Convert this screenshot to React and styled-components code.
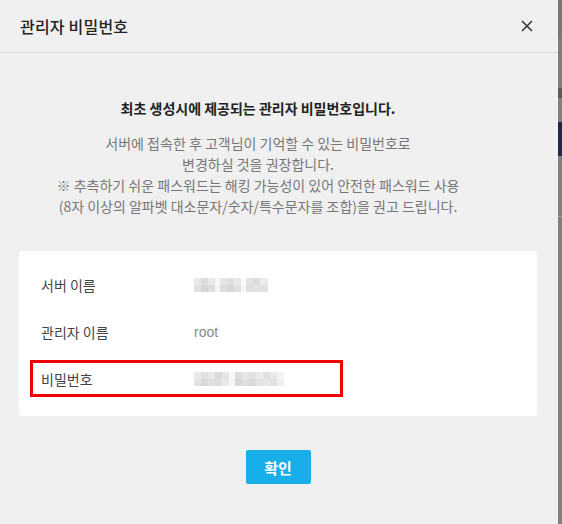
import React from "react";
import styled, { createGlobalStyle } from "styled-components";

const GlobalStyle = createGlobalStyle`
  html, body {
    margin: 0;
    padding: 0;
    background: #7f7f7f;
  }
  body {
    font-family: "Noto Sans CJK KR", "Noto Sans", sans-serif;
  }
`;

const Screen = styled.div`
  display: flex;
  width: 562px;
  height: 524px;
  overflow: hidden;
`;

const Dialog = styled.div`
  width: 558px;
  height: 524px;
  background: #f0f0f0;
  display: flex;
  flex-direction: column;
`;

const Backdrop = styled.div`
  flex: 1;
  display: flex;
  flex-direction: column;
  background: #808080;
`;

const BackdropBand = styled.div`
  height: ${(p) => p.h}px;
  background: ${(p) => p.c};
`;

const Header = styled.div`
  height: 52px;
  border-bottom: 1px solid #dcdcdc;
  display: flex;
  align-items: center;
  justify-content: space-between;
  padding: 0 20px 0 20px;
`;

const Title = styled.h2`
  margin: 0;
  font-size: 16px;
  font-weight: 500;
  color: #222;
  letter-spacing: 0.2px;
`;

const Close = styled.button`
  border: 0;
  background: none;
  padding: 0;
  width: 16px;
  height: 16px;
  display: flex;
  align-items: center;
  justify-content: center;
  cursor: pointer;
  margin-right: 3px;
`;

const Body = styled.div`
  padding: 45px 21px 0 19px;
  display: flex;
  flex-direction: column;
  align-items: center;
`;

const Notice = styled.div`
  width: 100%;
  padding-right: 40px;
  box-sizing: border-box;
  text-align: center;
`;

const Lead = styled.p`
  margin: 0 0 15px;
  font-size: 14px;
  font-weight: 700;
  color: #222;
  line-height: 20px;
`;

const Desc = styled.p`
  margin: 0;
  font-size: 14px;
  color: #777;
  line-height: 21px;
`;

const InfoCard = styled.div`
  margin-top: 34px;
  width: 100%;
  background: #fff;
  border-radius: 3px;
  padding: 10px 11px 19px;
  box-sizing: border-box;
  display: flex;
  flex-direction: column;
`;

const Row = styled.div`
  display: flex;
  align-items: center;
  padding-left: 8px;
  width: 313px;
  box-sizing: border-box;
  border: 3px solid ${(p) => (p.$highlight ? "#f00000" : "transparent")};
  height: ${(p) => (p.$highlight ? "37px" : "47px")};
  margin-top: ${(p) => (p.$highlight ? "5px" : "0")};
`;

const Label = styled.span`
  width: 153px;
  font-size: 14px;
  color: #444;
`;

const Value = styled.span`
  font-size: 14px;
  color: #888;
  font-family: "Liberation Sans", Arial, sans-serif;
`;

const Blurred = styled.span`
  display: inline-flex;
  align-items: center;
`;

const PixelColumn = styled.span`
  display: inline-flex;
  flex-direction: column;
`;

const Pixel = styled.span`
  display: inline-block;
  width: ${(p) => p.w}px;
  height: 7px;
  background: ${(p) => p.c};
`;

const Footer = styled.div`
  display: flex;
  justify-content: center;
  margin-top: 34px;
`;

const Confirm = styled.button`
  width: 65px;
  height: 34px;
  border: 0;
  border-radius: 2px;
  background: #17aeea;
  color: #fff;
  font-family: "Noto Sans CJK KR", sans-serif;
  font-size: 15px;
  font-weight: 700;
  cursor: pointer;
`;

const BlurBlock = ({ cells }) => (
  <Blurred>
    {cells.map((c, i) => (
      <PixelColumn key={i}>
        <Pixel w={c[0]} c={c[1]} />
        <Pixel w={c[0]} c={c[2]} />
      </PixelColumn>
    ))}
  </Blurred>
);

const serverCells = [
  [7, "#e9e9e9", "#e1e1e1"],
  [7, "#dcdcdc", "#d6d6d6"],
  [7, "#e8e8e8", "#dfdfdf"],
  [5, "#f8f8f8", "#f6f6f6"],
  [7, "#e5e5e5", "#dddddd"],
  [7, "#e0e0e0", "#d7d7d7"],
  [7, "#eaeaea", "#e1e1e1"],
  [5, "#fafafa", "#f8f8f8"],
  [7, "#e3e3e3", "#dfdfdf"],
  [7, "#dbdbdb", "#e3e3e3"],
  [8, "#ececec", "#e1e1e1"],
];

const passCells = [
  [7, "#eaeaea", "#e3e3e3"],
  [7, "#e0e0e0", "#d9d9d9"],
  [7, "#e7e7e7", "#e1e1e1"],
  [7, "#dadada", "#dddddd"],
  [7, "#e5e5e5", "#e9e9e9"],
  [6, "#f8f8f8", "#f6f6f6"],
  [7, "#dedede", "#d7d7d7"],
  [7, "#e6e6e6", "#dedede"],
  [7, "#e1e1e1", "#dadada"],
  [7, "#ebebeb", "#e3e3e3"],
  [7, "#e1e1e1", "#e6e6e6"],
  [7, "#e9e9e9", "#e1e1e1"],
  [7, "#f2f2f2", "#f0f0f0"],
];

export default function App() {
  return (
    <>
      <GlobalStyle />
      <Screen>
        <Dialog>
          <Header>
            <Title>관리자 비밀번호</Title>
            <Close aria-label="닫기">
              <svg width="12" height="12" viewBox="0 0 12 12">
                <path d="M1 1L11 11M11 1L1 11" stroke="#333" strokeWidth="1.5" />
              </svg>
            </Close>
          </Header>
          <Body>
            <Notice>
              <Lead>최초 생성시에 제공되는 관리자 비밀번호입니다.</Lead>
              <Desc>
                서버에 접속한 후 고객님이 기억할 수 있는 비밀번호로
                <br />
                변경하실 것을 권장합니다.
                <br />
                ※ 추측하기 쉬운 패스워드는 해킹 가능성이 있어 안전한 패스워드 사용
                <br />
                (8자 이상의 알파벳 대소문자/숫자/특수문자를 조합)을 권고 드립니다.
              </Desc>
            </Notice>
            <InfoCard>
              <Row>
                <Label>서버 이름</Label>
                <BlurBlock cells={serverCells} />
              </Row>
              <Row>
                <Label>관리자 이름</Label>
                <Value>root</Value>
              </Row>
              <Row $highlight>
                <Label>비밀번호</Label>
                <BlurBlock cells={passCells} />
              </Row>
            </InfoCard>
            <Footer>
              <Confirm>확인</Confirm>
            </Footer>
          </Body>
        </Dialog>
        <Backdrop>
          <BackdropBand h={38} c="#777" />
          <BackdropBand h={50} c="#7e7e7e" />
          <BackdropBand h={10} c="#5a5a5a" />
          <BackdropBand h={24} c="#808080" />
          <BackdropBand h={34} c="#1e2a4c" />
          <BackdropBand h={60} c="#808080" />
          <BackdropBand h={1} c="#999" />
        </Backdrop>
      </Screen>
    </>
  );
}
